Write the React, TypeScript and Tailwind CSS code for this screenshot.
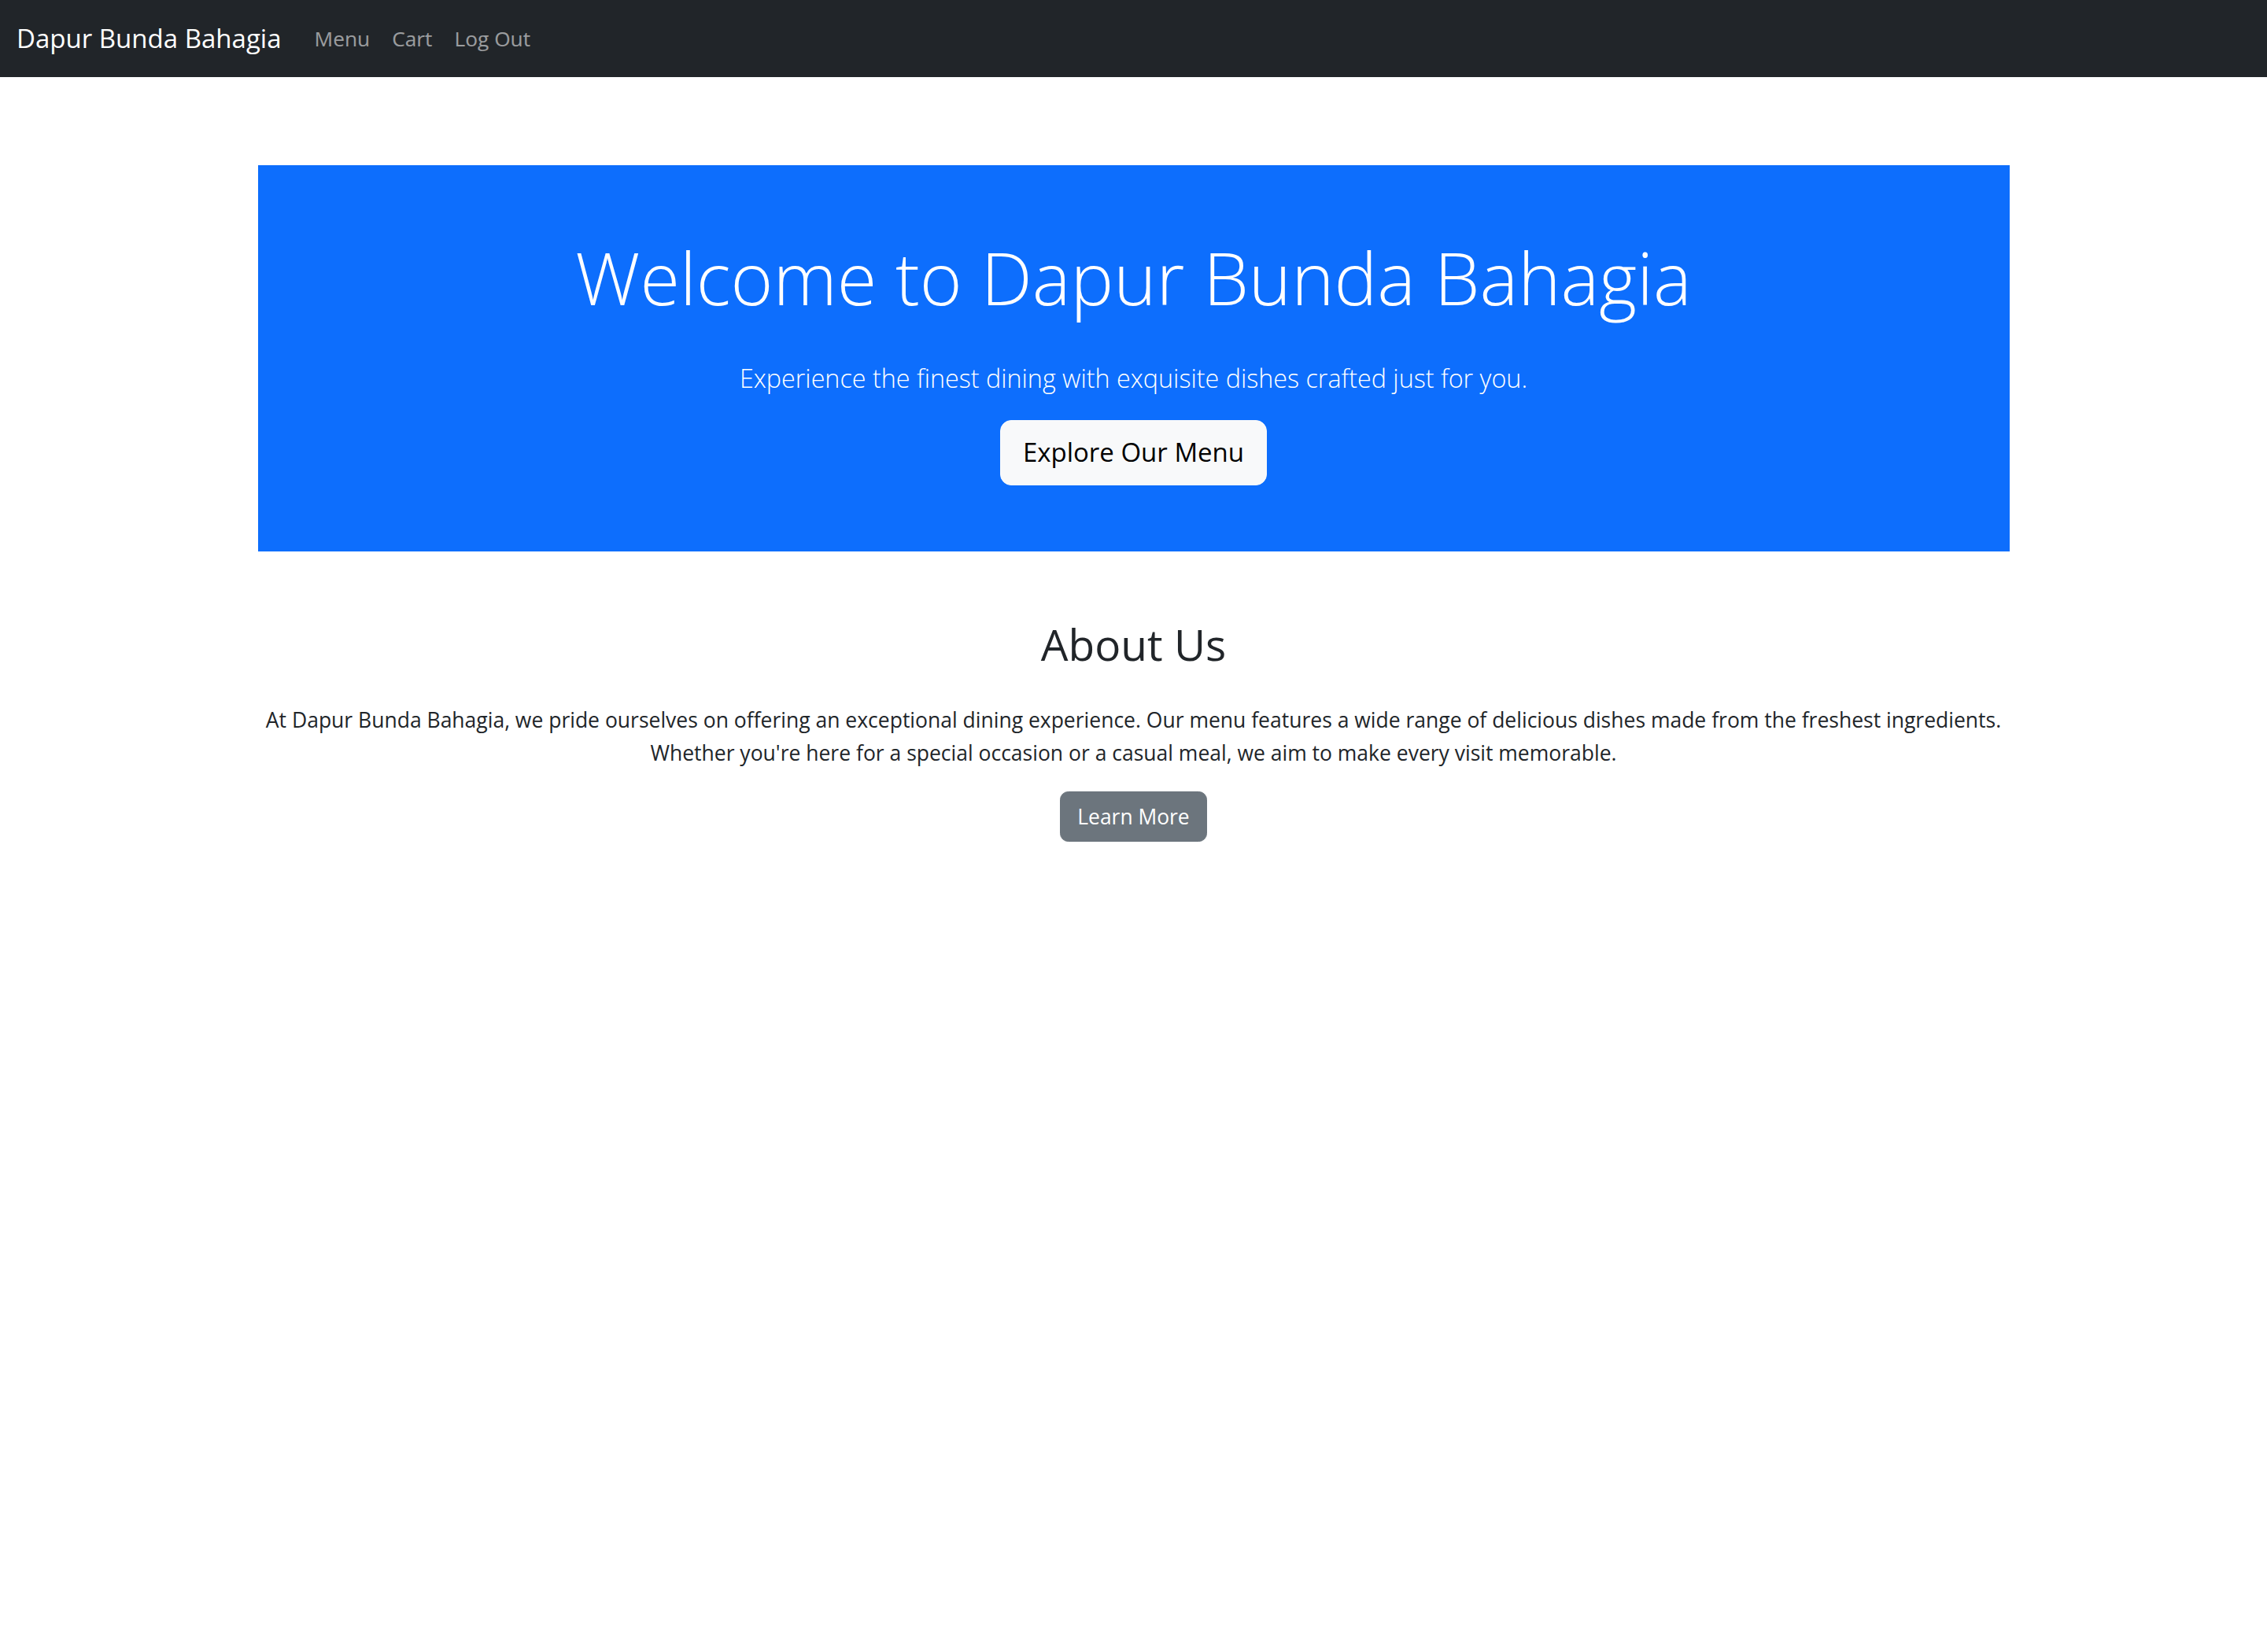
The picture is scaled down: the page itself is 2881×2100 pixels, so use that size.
import React from 'react';

const font = { fontFamily: '"Open Sans", "Noto Sans", sans-serif' };

const NavBar = () => {
  return (
    <nav className="bg-[#212529] h-[98px] px-[21px] flex items-center">
      <a href="#" className="text-white text-[33px] leading-[52.5px] py-[8.75px] mr-[28px] whitespace-nowrap">
        Dapur Bunda Bahagia
      </a>
      <ul className="flex items-center">
        {['Menu', 'Cart', 'Log Out'].map((item) => (
          <li key={item}>
            <a href="#" className="block px-[14px] py-[14px] text-[26.3px] leading-[42px] text-white/55 whitespace-nowrap">
              {item}
            </a>
          </li>
        ))}
      </ul>
    </nav>
  );
};

const Hero = () => {
  return (
    <section className="mt-[112px] mx-auto w-[2226px] bg-[#0d6efd] py-[84px] text-center text-white">
      <h1 className="text-[92px] font-light leading-[117.6px] mb-[42px]">Welcome to Dapur Bunda Bahagia</h1>
      <p className="text-[32.3px] font-light leading-[52.5px] mb-[28px]">
        Experience the finest dining with exquisite dishes crafted just for you.
      </p>
      <a
        href="#"
        className="inline-block bg-[#f8f9fa] border-[1.75px] border-[#f8f9fa] text-black text-[33px] leading-[52.5px] px-[28px] py-[14px] rounded-[14px]"
      >
        Explore Our Menu
      </a>
    </section>
  );
};

const About = () => {
  return (
    <section className="mt-[84px] mx-auto w-[2226px] text-center text-[#212529]">
      <h2 className="text-[55px] font-medium leading-[67.2px] mb-[42px]">About Us</h2>
      <p className="text-[26.5px] leading-[42px] mb-[28px]">
        At Dapur Bunda Bahagia, we pride ourselves on offering an exceptional dining experience. Our menu features a wide range of delicious dishes made from the freshest ingredients.
        <br />
        Whether you're here for a special occasion or a casual meal, we aim to make every visit memorable.
      </p>
      <a
        href="#"
        className="inline-block bg-[#6c757d] border-[1.75px] border-[#6c757d] text-white text-[26.4px] leading-[42px] px-[21px] py-[10px] rounded-[10.5px]"
      >
        Learn More
      </a>
    </section>
  );
};

export default function App() {
  return (
    <div className="min-h-[2100px] bg-white" style={font}>
      <NavBar />
      <Hero />
      <About />
    </div>
  );
}
